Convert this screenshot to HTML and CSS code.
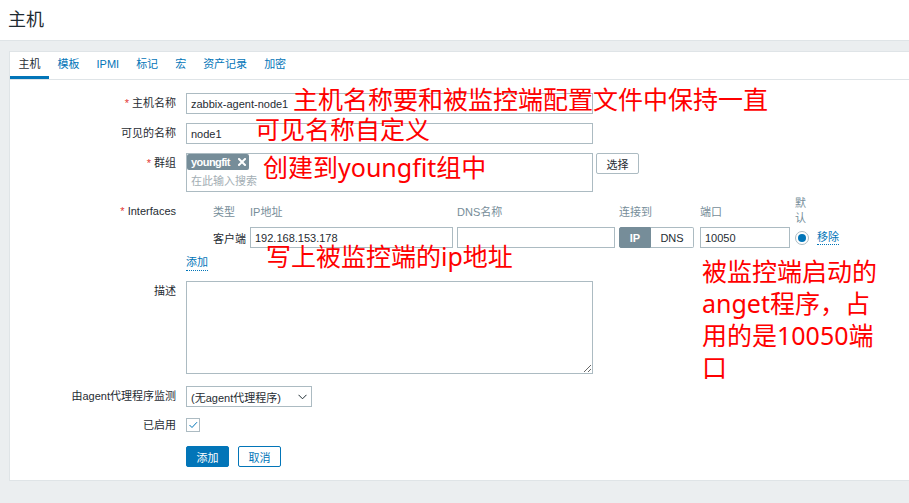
FILE: index.html
```html
<!DOCTYPE html>
<html lang="zh-CN">
<head>
<meta charset="utf-8">
<title>主机</title>
<link rel="stylesheet" href="styles.css">
</head>
<body>
<header class="page-header"><h1 class="page-title">主机</h1></header>
<main class="page-main">
  <section class="card">
    <nav class="tabs">
      <a class="tab active">主机</a>
      <a class="tab">模板</a>
      <a class="tab">IPMI</a>
      <a class="tab">标记</a>
      <a class="tab">宏</a>
      <a class="tab">资产记录</a>
      <a class="tab">加密</a>
    </nav>
    <form class="form">
      <div class="row">
        <label class="label"><span class="req">*</span> 主机名称</label>
        <div class="field"><input class="input w-main" value="zabbix-agent-node1"></div>
      </div>
      <div class="row">
        <label class="label">可见的名称</label>
        <div class="field"><input class="input w-main" value="node1"></div>
      </div>
      <div class="row">
        <label class="label"><span class="req">*</span> 群组</label>
        <div class="field field-inline">
          <div class="multiselect w-main">
            <span class="ms-tag">youngfit<svg class="ms-x" width="8" height="8" viewBox="0 0 8 8"><path d="M1 1L7 7M7 1L1 7" stroke="#fff" stroke-width="2" stroke-linecap="square"/></svg></span>
            <span class="ms-placeholder">在此输入搜索</span>
          </div>
          <button type="button" class="btn-grey">选择</button>
        </div>
      </div>
      <div class="row row-iface">
        <label class="label label-iface"><span class="req">*</span> Interfaces</label>
        <div class="field">
          <div class="iface">
            <div class="iface-grid">
              <span class="ih">类型</span>
              <span class="ih">IP地址</span>
              <span class="ih">DNS名称</span>
              <span class="ih">连接到</span>
              <span class="ih">端口</span>
              <span class="ih ih-default">默认</span>
              <span></span>
              <span class="itype">客户端</span>
              <span><input class="input w-ip" value="192.168.153.178"></span>
              <span><input class="input w-dns" value=""></span>
              <span class="seg"><span class="seg-item on">IP</span><span class="seg-item">DNS</span></span>
              <span><input class="input w-port" value="10050"></span>
              <span class="radio"><span class="radio-dot"></span></span>
              <span><a class="link">移除</a></span>
            </div>
          </div>
          <a class="link link-add">添加</a>
        </div>
      </div>
      <div class="row row-desc">
        <label class="label">描述</label>
        <div class="field"><textarea class="textarea w-main"></textarea></div>
      </div>
      <div class="row row-proxy">
        <label class="label">由agent代理程序监测</label>
        <div class="field">
          <div class="select"><span>(无agent代理程序)</span><svg width="9" height="6" viewBox="0 0 9 6"><path d="M0.5 0.8L4.5 4.8L8.5 0.8" fill="none" stroke="#1f2c33" stroke-width="1"/></svg></div>
        </div>
      </div>
      <div class="row row-check">
        <label class="label">已启用</label>
        <div class="field">
          <span class="checkbox"><svg width="12" height="12" viewBox="0 0 12 12"><path d="M2.5 6L5 8.5L10 3.2" fill="none" stroke="#0275b8" stroke-width="1"/></svg></span>
        </div>
      </div>
      <div class="row row-buttons">
        <span class="label"></span>
        <div class="field field-buttons">
          <button type="button" class="btn-primary">添加</button>
          <button type="button" class="btn-alt">取消</button>
        </div>
      </div>
    </form>
  </section>
</main>

<div class="note note-1">主机名称要和被监控端配置文件中保持一直</div>
<div class="note note-2">可见名称自定义</div>
<div class="note note-3">创建到youngfit组中</div>
<div class="note note-4">写上被监控端的ip地址</div>
<div class="note note-5">被监控端启动的<br>anget程序，占<br>用的是10050端<br>口</div>
</body>
</html>
```

FILE: styles.css
```css
* { box-sizing: border-box; }
html, body { margin: 0; padding: 0; }
body {
  width: 909px;
  height: 503px;
  overflow: hidden;
  position: relative;
  background: #ebeef0;
  font-family: "Liberation Sans", "Noto Sans CJK SC", sans-serif;
  font-size: 11px;
  color: #1f2c33;
}

.page-header {
  height: 41px;
  background: #fff;
  border-bottom: 1px solid #dfe4e7;
  padding-left: 8px;
}
.page-title {
  margin: 0;
  font-size: 18px;
  font-weight: normal;
  line-height: 40px;
  color: #1f2c33;
}

.page-main { padding: 10px 0 0 9px; }

.card {
  background: #fff;
  border: 1px solid #dfe4e7;
  border-right: none;
  height: 430px;
}

.tabs {
  display: flex;
  border-bottom: 1px solid #dfe4e7;
}
.tab {
  padding: 0 8.5px;
  line-height: 24px;
  border-bottom: 3px solid transparent;
  color: #0275b8;
  cursor: pointer;
}
.tab.active {
  color: #1f2c33;
  border-bottom-color: #0275b8;
}

.form { padding-top: 13px; }

.row { display: flex; align-items: flex-start; }
.row + .row { margin-top: 9px; }
.label {
  flex: none;
  width: 166px;
  margin-right: 10px;
  text-align: right;
  line-height: 21px;
  white-space: nowrap;
}
.req { color: #e33734; }
.field { flex: none; }
.field-inline { display: flex; align-items: flex-start; }

.input {
  height: 21px;
  border: 1px solid #acbbc2;
  padding: 0 4px;
  font: inherit;
  color: #1f2c33;
  background: #fff;
  outline: none;
  display: block;
}
.w-main { width: 407px; }
.w-ip { width: 203px; }
.w-dns { width: 158px; }
.w-port { width: 90px; }

.multiselect {
  height: 39px;
  border: 1px solid #acbbc2;
  display: flex;
  flex-direction: column;
  align-items: flex-start;
}
.ms-tag {
  display: inline-flex;
  align-items: center;
  height: 16px;
  padding: 0 3px 0 4px;
  background: #768d99;
  color: #fff;
  font-weight: bold;
  letter-spacing: -0.55px;
  border-radius: 2px;
}
.ms-x { margin-left: 8px; }
.ms-placeholder {
  margin-top: 3px;
  padding-left: 4px;
  line-height: 16px;
  color: #a3aeb4;
}

.btn-grey {
  margin-left: 3px;
  width: 43px;
  height: 21px;
  border: 1px solid #acbbc2;
  border-radius: 2px;
  background: #fff;
  color: #1f2c33;
  font: inherit;
  padding: 0;
}

.row.row-iface { margin-top: 4px; }
.label-iface { padding-top: 4.5px; }
.iface { margin-left: 27px; }
.iface-grid {
  display: grid;
  grid-template-columns: 37px 207px 162px 81px 95px 22px auto;
  grid-template-rows: 30px 21px;
  row-gap: 1px;
  align-items: center;
}
.ih { color: #768d99; white-space: nowrap; }
.ih-default { white-space: normal; line-height: 15px; width: 14px; }
.itype { white-space: nowrap; }

.seg {
  display: flex;
  width: 75px;
  height: 21px;
}
.seg-item {
  display: flex;
  align-items: center;
  justify-content: center;
  border: 1px solid #acbbc2;
  border-left: none;
  width: 43px;
  color: #1f2c33;
}
.seg-item.on {
  width: 32px;
  border: 1px solid #768d99;
  background: #768d99;
  color: #fff;
  font-weight: bold;
  border-radius: 2px 0 0 2px;
}
.seg-item:last-child { border-radius: 0 2px 2px 0; }

.radio {
  width: 14px;
  height: 14px;
  border: 1px solid #acbbc2;
  border-radius: 50%;
  display: flex;
  align-items: center;
  justify-content: center;
  background: #fff;
}
.radio-dot {
  width: 8px;
  height: 8px;
  border-radius: 50%;
  background: #0275b8;
}

.link {
  color: #0275b8;
  border-bottom: 1px dotted #0275b8;
  line-height: 14px;
  display: inline-block;
  cursor: pointer;
}
.link-add {
  margin-top: 7px;
  line-height: 15px;
}

.row.row-desc { margin-top: 10px; }
.label-top { line-height: 21px; }
.textarea {
  display: block;
  height: 93px;
  border: 1px solid #acbbc2;
  font: inherit;
  padding: 3px 4px;
  margin: 0;
  outline: none;
}

.row.row-proxy { margin-top: 12px; }
.select {
  width: 126px;
  height: 21px;
  border: 1px solid #acbbc2;
  display: flex;
  align-items: center;
  justify-content: space-between;
  padding: 0 4px 0 4px;
  white-space: nowrap;
}

.row.row-check { margin-top: 8px; }
.checkbox {
  display: flex;
  align-items: center;
  justify-content: center;
  margin-top: 3px;
  width: 14px;
  height: 14px;
  border: 1px solid #acbbc2;
  background: #fff;
}

.row.row-buttons { margin-top: 10px; }
.field-buttons { display: flex; gap: 9px; }
.btn-primary, .btn-alt {
  width: 43px;
  height: 21px;
  border-radius: 2px;
  font: inherit;
  padding: 0;
  border: 1px solid #0275b8;
}
.btn-primary { background: #0275b8; color: #fff; }
.btn-alt { background: #fff; color: #0275b8; }

.note {
  position: absolute;
  font-family: "Noto Sans", "Noto Sans CJK SC", sans-serif;
  font-size: 25px;
  line-height: 25px;
  color: #ff0000;
  white-space: nowrap;
}
.note-1 { left: 293px; top: 87px; }
.note-2 { left: 255px; top: 117px; }
.note-3 { left: 263px; top: 155px; }
.note-4 { left: 266px; top: 244px; }
.note-5 { left: 702px; top: 255px; line-height: 32px; }
```
